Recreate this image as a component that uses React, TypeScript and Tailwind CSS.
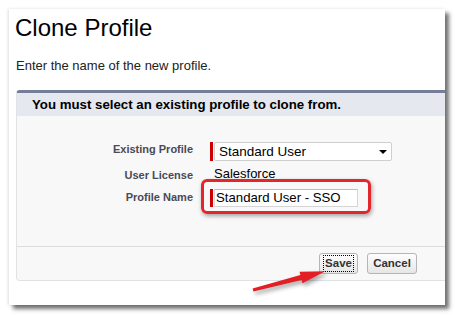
import React from "react";

export default function App() {
  return (
    <div className="relative w-[455px] h-[316px] overflow-hidden bg-white pl-[9px] pt-[9px] font-['Liberation_Sans',Arial,sans-serif]">
      <div className="w-[436px] h-[296px] overflow-hidden bg-white pl-[7px] pt-[5px] shadow-[4px_4px_4px_rgba(0,0,0,0.55),-1px_0_3px_rgba(0,0,0,0.12)]">
        <h1 className="ml-[-1px] text-[24px] leading-[28px] text-black">Clone Profile</h1>
        <p className="mt-[16px] text-[13px] leading-[16px] text-[#222]">Enter the name of the new profile.</p>
        <div className="mt-[16px] w-[440px] rounded-[4px] border border-[#e0e3e5] border-t-[3px] border-t-[#747e96] bg-[#f8f8f8]">
          <div className="flex h-[23px] items-center bg-[#e5e8ef] pl-[15px] text-[13.25px] font-bold leading-[16px] text-black">
            You must select an existing profile to clone from.
          </div>
          <div className="h-[130px] pt-[26px]">
            <div className="flex h-[19px]">
              <div className="w-[176px] pt-[1px] text-right text-[11px] font-bold leading-[13px] text-[#4a4a56]">Existing Profile</div>
              <div className="ml-[17px] h-[19px] w-[3px] bg-[#c00]" />
              <div className="relative ml-[1px] flex h-[19px] w-[178px] items-center rounded-[2px] border border-[#cfcfcf] bg-white pl-[4px] text-[13.5px] leading-[16px] text-black">
                Standard User
                <svg className="absolute right-[4px] top-[7px]" width="8" height="4" viewBox="0 0 8 4">
                  <polygon points="0,0 8,0 4,4" fill="#000" />
                </svg>
              </div>
            </div>
            <div className="mt-[5px] flex h-[16px]">
              <div className="w-[176px] pt-[3px] text-right text-[11px] font-bold leading-[13px] text-[#4a4a56]">User License</div>
              <div className="ml-[21px] text-[13px] leading-[16px] text-black">Salesforce</div>
            </div>
            <div className="mt-[7px] flex h-[18px]">
              <div className="w-[176px] pt-[2px] text-right text-[11px] font-bold leading-[13px] text-[#4a4a56]">Profile Name</div>
              <div className="ml-[17px] h-[18px] w-[3px] bg-[#c00]" />
              <div className="ml-[1px] flex h-[18px] w-[144px] items-center border border-[#d5d5d5] border-t-[#bdbdbd] bg-white pl-[1px] text-[13.2px] leading-[16px] text-black">
                Standard User - SSO
              </div>
            </div>
          </div>
          <div className="flex h-[34px] border-t border-[#dcdcdc] pt-[6px]">
            <button className="relative ml-[302px] h-[21px] w-[39px] rounded-[3px] border border-[#b5b5b5] bg-linear-to-b from-[#fefefe] to-[#e6e6e6] text-[11.5px] font-bold leading-[13px] text-[#333]">
              <span className="absolute inset-x-[3px] inset-y-[1px] border border-dotted border-black" />
              Save
            </button>
            <button className="ml-[9px] h-[21px] w-[50px] rounded-[3px] border border-[#b5b5b5] bg-linear-to-b from-[#fefefe] to-[#e6e6e6] text-[11.5px] font-bold leading-[13px] text-[#333]">
              Cancel
            </button>
          </div>
        </div>
      </div>

      <div className="absolute left-[201px] top-[179px] h-[35px] w-[170px] rounded-[6px] border-[3px] border-[#e3262b] shadow-[1px_2px_4px_rgba(0,0,0,0.35)]" />

      <svg className="pointer-events-none absolute left-0 top-0 drop-shadow-[2px_3px_2px_rgba(0,0,0,0.35)]" width="455" height="316" viewBox="0 0 455 316">
        <polygon
          points="252.6,288.5 300.4,275.1 299.5,271.7 325.3,271.3 302.5,283.3 301.6,279.9 253.4,291.5"
          fill="#e31e24"
        />
      </svg>
    </div>
  );
}
